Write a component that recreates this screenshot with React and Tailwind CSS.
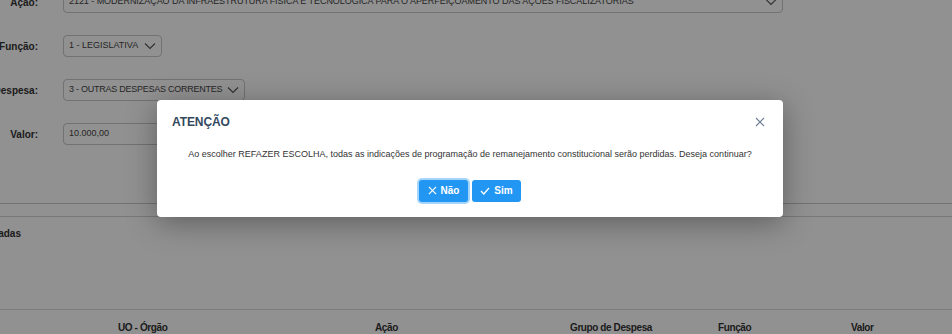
import React from 'react'

const Chevron = () => (
    <svg width="12" height="8" viewBox="0 0 12 8" fill="none">
        <path d="M1 1.5 L6 6.5 L11 1.5" stroke="#555" strokeWidth="1.1" />
    </svg>
)

const Row = ({ label, children, top }) => (
    <div className={`flex items-center h-[22px] ${top}`}>
        <div className="w-[38px] shrink-0 font-bold text-[10px] text-[#333] whitespace-nowrap flex justify-end">
            <span>{label}</span>
        </div>
        <div className="ml-[25px]">{children}</div>
    </div>
)

const Select = ({ value, width, track = "" }) => (
    <div className={`h-[22px] ${width} border border-[#c8c8c8] rounded-[4px] bg-white flex items-center justify-between pl-[5px] pr-[5px] text-[9px] text-[#444] whitespace-nowrap`}>
        <span className={track}>{value}</span>
        <Chevron />
    </div>
)

const App = () => {
    return (
        <div className="relative w-[952px] h-[334px] overflow-hidden bg-white font-['Liberation_Sans',Arial,sans-serif]">
            {/* page behind the dialog */}
            <div className="flex flex-col">
                <Row label="Ação:" top="-mt-[9px]">
                    <Select width="w-[720px]" track="tracking-[-0.05px]" value="2121 - MODERNIZAÇÃO DA INFRAESTRUTURA FÍSICA E TECNOLÓGICA PARA O APERFEIÇOAMENTO DAS AÇÕES FISCALIZATÓRIAS" />
                </Row>
                <Row label="Função:" top="mt-[22px]">
                    <Select width="w-[99px]" value="1 - LEGISLATIVA" />
                </Row>
                <Row label="Despesa:" top="mt-[22px]">
                    <Select width="w-[182px]" track="tracking-[-0.25px]" value="3 - OUTRAS DESPESAS CORRENTES" />
                </Row>
                <Row label="Valor:" top="mt-[22px]">
                    <div className="h-[22px] w-[200px] border border-[#c8c8c8] rounded-[4px] bg-white flex items-center pl-[5px] text-[9px] text-[#444]">10.000,00</div>
                </Row>
                <div className="mt-[58px] border-t border-[#c9c9c9]" />
                <div className="mt-[12px] border-t border-[#d4d4d4]" />
                <div className="mt-[9px] w-[21px] flex justify-end whitespace-nowrap text-[10px] font-bold text-[#333]">
                    <span>Indicadas</span>
                </div>
                <div className="mt-[68px] border-t border-[#dcdcdc]" />
                <div className="grid grid-cols-[257px_195px_148px_133px_auto] pl-[118px] pt-[10px] text-[10px] font-bold text-[#333] tracking-[-0.4px] whitespace-nowrap">
                    <div>UO - Órgão</div>
                    <div>Ação</div>
                    <div>Grupo de Despesa</div>
                    <div>Função</div>
                    <div>Valor</div>
                </div>
            </div>

            {/* overlay */}
            <div className="absolute inset-0 bg-black/[0.43]" />

            {/* dialog */}
            <div className="absolute left-[157px] top-[100px] w-[626px] h-[117px] bg-white rounded-[4px] shadow-[0_6px_30px_rgba(0,0,0,0.35)] flex flex-col">
                <div className="flex items-center justify-between pl-[15px] pr-[18px] pt-[13px]">
                    <span className="text-[12px] font-bold text-[#34495e] tracking-[-0.1px]">ATENÇÃO</span>
                    <svg width="10" height="10" viewBox="0 0 10 10">
                        <path d="M1 1 L9 9 M9 1 L1 9" stroke="#6f7f95" strokeWidth="1.1" />
                    </svg>
                </div>
                <p className="mt-[17px] text-center text-[9px] text-[#333] whitespace-nowrap">
                    Ao escolher REFAZER ESCOLHA, todas as indicações de programação de remanejamento constitucional serão perdidas. Deseja continuar?
                </p>
                <div className="mt-[18px] flex justify-center gap-[4px]">
                    <button className="h-[22px] w-[49px] rounded-[3px] bg-[#2196f3] text-white text-[10px] font-bold flex items-center justify-center gap-[4px] ring-2 ring-[#a6d5fa]">
                        <svg width="9" height="9" viewBox="0 0 10 10">
                            <path d="M1 1 L9 9 M9 1 L1 9" stroke="white" strokeWidth="1.4" />
                        </svg>
                        Não
                    </button>
                    <button className="h-[22px] w-[49px] rounded-[3px] bg-[#2196f3] text-white text-[10px] font-bold flex items-center justify-center gap-[4px]">
                        <svg width="10" height="8" viewBox="0 0 10 8">
                            <path d="M1 4 L3.8 7 L9 1" stroke="white" strokeWidth="1.3" fill="none" />
                        </svg>
                        Sim
                    </button>
                </div>
            </div>
        </div>
    )
}

export default App
